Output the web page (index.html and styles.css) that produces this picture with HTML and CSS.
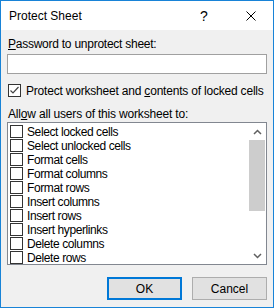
FILE: index.html
```html
<!DOCTYPE html>
<html lang="en">
<head>
    <meta charset="UTF-8">
    <title>Protect Sheet</title>
    <link rel="stylesheet" href="styles.css">
</head>
<body>
    <div class="dialog">
        <div class="titlebar">
            <span class="title">Protect Sheet</span>
            <span class="caption-btn help">?</span>
            <span class="caption-btn close">
                <svg width="10" height="10" viewBox="0 0 10 10"><path d="M0.5 0.5 L9.5 9.5 M9.5 0.5 L0.5 9.5" stroke="#000" stroke-width="1" fill="none"/></svg>
            </span>
        </div>

        <div class="content">
            <div class="label"><u>P</u>assword to unprotect sheet:</div>
            <div class="textbox"></div>

            <div class="check-row">
                <span class="box">
                    <svg width="11" height="11" viewBox="0 0 11 11"><path d="M1.5 5.5 L4 8 L9.5 2" stroke="#444" stroke-width="1.2" fill="none"/></svg>
                </span>
                <span>Protect worksheet and <u>c</u>ontents of locked cells</span>
            </div>

            <div class="label allow">All<u>o</u>w all users of this worksheet to:</div>
            <div class="listbox">
                <ul class="items">
                    <li class="item"><span class="box"></span>Select locked cells</li>
                    <li class="item"><span class="box"></span>Select unlocked cells</li>
                    <li class="item"><span class="box"></span>Format cells</li>
                    <li class="item"><span class="box"></span>Format columns</li>
                    <li class="item"><span class="box"></span>Format rows</li>
                    <li class="item"><span class="box"></span>Insert columns</li>
                    <li class="item"><span class="box"></span>Insert rows</li>
                    <li class="item"><span class="box"></span>Insert hyperlinks</li>
                    <li class="item"><span class="box"></span>Delete columns</li>
                    <li class="item"><span class="box"></span>Delete rows</li>
                </ul>
                <div class="scrollbar">
                    <div class="arrow">
                        <svg width="9" height="6" viewBox="0 0 9 6"><path d="M1 5 L4.5 1.5 L8 5" stroke="#606060" stroke-width="1.5" fill="none"/></svg>
                    </div>
                    <div class="thumb"></div>
                    <div class="track"></div>
                    <div class="arrow">
                        <svg width="9" height="6" viewBox="0 0 9 6"><path d="M1 1 L4.5 4.5 L8 1" stroke="#606060" stroke-width="1.5" fill="none"/></svg>
                    </div>
                </div>
            </div>

            <div class="buttons">
                <button class="btn default">OK</button>
                <button class="btn">Cancel</button>
            </div>
        </div>
    </div>
</body>
</html>
```

FILE: styles.css
```css
* {
    box-sizing: border-box;
}
body {
    margin: 0;
    font-family: "Liberation Sans", Arial, sans-serif;
    font-size: 12px;
    color: #000;
}
.dialog {
    width: 274px;
    height: 308px;
    border: 1px solid #1883d7;
    background: #f0f0f0;
    display: flex;
    flex-direction: column;
}
.titlebar {
    height: 29px;
    background: #fff;
    display: flex;
    align-items: center;
    flex-shrink: 0;
}
.title {
    flex: 1;
    padding-left: 8px;
    padding-top: 1px;
    line-height: 15px;
}
.caption-btn {
    width: 46px;
    height: 29px;
    display: flex;
    align-items: center;
    justify-content: center;
}
.help {
    font-size: 14px;
    padding-top: 1px;
}
.close svg {
    display: block;
    margin-left: 1px;
}
.content {
    padding: 7px 6px 0 6px;
    flex: 1;
    display: flex;
    flex-direction: column;
}
.label {
    line-height: 15px;
    padding-left: 1px;
    letter-spacing: -0.25px;
}
u {
    text-decoration: underline;
    text-underline-offset: 1px;
}
.textbox {
    height: 20px;
    margin-top: 2px;
    background: #fff;
    border: 1px solid #a0a0a0;
}
.check-row {
    display: flex;
    align-items: center;
    height: 15px;
    margin-top: 9px;
    padding-left: 1px;
    letter-spacing: -0.2px;
}
.box {
    width: 13px;
    height: 13px;
    border: 1px solid #333;
    background: #fff;
    flex-shrink: 0;
    display: flex;
    align-items: center;
    justify-content: center;
}
.check-row .box {
    margin-right: 5px;
}
.allow {
    margin-top: 9px;
    letter-spacing: -0.18px;
}
.listbox {
    height: 143px;
    background: #fff;
    border: 1px solid #828790;
    display: flex;
    overflow: hidden;
}
.items {
    list-style: none;
    margin: 0;
    padding: 2px 0 0 2px;
    flex: 1;
}
.item {
    height: 14px;
    line-height: 14px;
    display: flex;
    align-items: flex-start;
    letter-spacing: -0.4px;
}
.item .box {
    margin-right: 4px;
}
.scrollbar {
    width: 17px;
    display: flex;
    flex-direction: column;
    background: #fff;
}
.arrow {
    height: 17px;
    display: flex;
    align-items: center;
    justify-content: center;
    flex-shrink: 0;
}
.thumb {
    height: 71px;
    margin: 0 1px 0 0;
    background: #cdcdcd;
}
.track {
    flex: 1;
}
.buttons {
    display: flex;
    justify-content: flex-end;
    gap: 10px;
    margin-top: 12px;
}
.btn {
    width: 75px;
    height: 23px;
    background: #e1e1e1;
    border: 1px solid #adadad;
    font-family: "Liberation Sans", Arial, sans-serif;
    font-size: 12px;
    color: #000;
    padding: 0;
}
.btn.default {
    border: 2px solid #0078d7;
}
```
